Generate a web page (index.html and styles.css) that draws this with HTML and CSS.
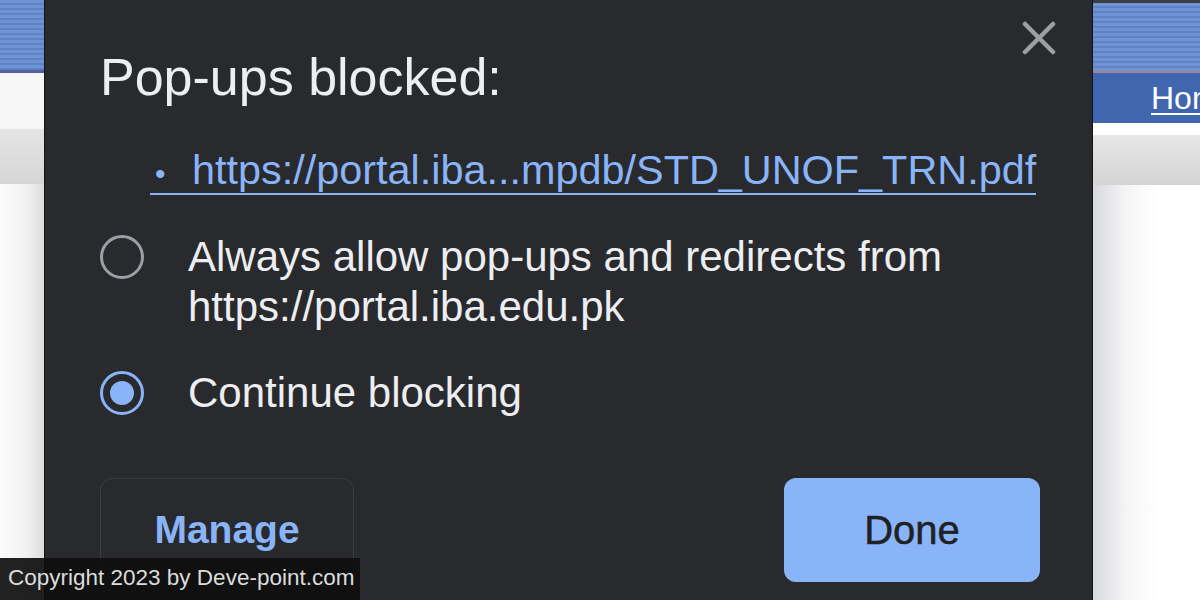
FILE: index.html
```html
<!DOCTYPE html>
<html lang="en">
<head>
  <meta charset="UTF-8">
  <title>Pop-ups blocked</title>
  <link rel="stylesheet" href="styles.css">
</head>
<body>

  <div class="page">
    <div class="side side-left">
      <div class="band"></div>
      <div class="rule"></div>
      <div class="blank"></div>
      <div class="shade"></div>
      <div class="fill"></div>
    </div>

    <div class="bubble">
      <div class="head">
        <h2>Pop-ups blocked:</h2>
        <svg class="close" width="34" height="34" viewBox="0 0 34 34">
          <path d="M3 3 L31 31 M31 3 L3 31" stroke="#9d9fa3" stroke-width="4.5" stroke-linecap="round"/>
        </svg>
      </div>

      <div class="links">
        <a class="blocked"><span class="dot">•</span>https://portal.iba...mpdb/STD_UNOF_TRN.pdf</a>
      </div>

      <div class="option">
        <span class="radio"></span>
        <span class="label">Always allow pop-ups and redirects from<br>https://portal.iba.edu.pk</span>
      </div>

      <div class="option">
        <span class="radio checked"></span>
        <span class="label">Continue blocking</span>
      </div>

      <div class="actions">
        <button class="manage">Manage</button>
        <button class="done">Done</button>
      </div>
    </div>

    <div class="side side-right">
      <div class="top-edge"></div>
      <div class="band"></div>
      <div class="rule"></div>
      <div class="nav"><a>Home</a></div>
      <div class="blank"></div>
      <div class="shade"></div>
      <div class="fill"></div>
    </div>
  </div>

  <div class="copyright">Copyright 2023 by Deve-point.com</div>

</body>
</html>
```

FILE: styles.css
```css
body {
  margin: 0;
  width: 1200px;
  height: 600px;
  overflow: hidden;
  font-family: 'Liberation Sans', Arial, sans-serif;
  background: #292a2d;
  position: relative;
}

.page {
  display: flex;
  height: 600px;
}

/* page behind the bubble */
.side {
  display: flex;
  flex-direction: column;
  overflow: hidden;
}

.side-left {
  width: 44px;
}

.side-right {
  width: 107px;
}

.band {
  height: 70px;
  background: repeating-linear-gradient(to bottom, #6f93d3 0, #6f93d3 3px, #5e82c6 3px, #5e82c6 5px);
}

.side-right .band {
  height: 67px;
}

.top-edge {
  height: 3px;
  background: #3a3d44;
}

.rule {
  height: 3px;
  background: #8f89a6;
}

.side-left .rule {
  background: #5560a0;
}

.blank {
  height: 56px;
  background: #f7f7f7;
}

.side-right .blank {
  height: 12px;
  background: #ffffff;
}

.shade {
  height: 55px;
  background: linear-gradient(to bottom, #e4e4e4, #d6d6d6);
}

.side-right .shade {
  height: 50px;
  background: linear-gradient(to bottom, #e6e6e6, #d3d3d3);
}

.fill {
  flex: 1;
}

.side-left .fill {
  background: linear-gradient(to right, #fbfbfb, #f2f2f2 60%, #dcdcdc);
}

.side-right .fill {
  background: linear-gradient(to right, #d8d9dd, #f4f4f5 30%, #ffffff 60%);
}

.nav {
  height: 50px;
  background: #4166b0;
  padding-left: 58px;
  white-space: nowrap;
}

.nav a {
  color: #ffffff;
  font-size: 32px;
  line-height: 50px;
  text-decoration: underline;
  text-decoration-thickness: 2px;
  text-underline-offset: 4px;
}

/* the bubble */
.bubble {
  width: 1049px;
  background: #292a2d;
  border-left: 1px solid #141416;
  border-right: 1px solid #141416;
  padding: 0 52px 0 55px;
  box-sizing: border-box;
  color: #e8eaed;
}

.head {
  display: flex;
  justify-content: space-between;
  align-items: flex-start;
}

h2 {
  margin: 52px 0 0;
  font-size: 52px;
  font-weight: normal;
  line-height: 50px;
  color: #eceef1;
}

.close {
  margin-top: 21px;
  margin-right: -16px;
}

.links {
  margin-top: 49px;
  padding-left: 50px;
}

.blocked {
  display: inline-block;
  color: #8ab4f8;
  font-size: 41.4px;
  line-height: 39px;
  padding-left: 5px;
  border-bottom: 2px solid #8ab4f8;
  white-space: nowrap;
}

.dot {
  display: inline-block;
  width: 37px;
  font-size: 30px;
}

.option {
  display: flex;
  align-items: flex-start;
  margin-top: 37px;
}

.option + .option {
  margin-top: 36px;
}

.radio {
  width: 38px;
  height: 38px;
  border: 3px solid #9aa0a6;
  border-radius: 50%;
  margin-top: 3px;
  margin-right: 44px;
  flex-shrink: 0;
  box-sizing: content-box;
  position: relative;
}

.radio.checked {
  border-color: #8ab4f8;
}

.radio.checked::after {
  content: "";
  position: absolute;
  left: 7px;
  top: 7px;
  width: 24px;
  height: 24px;
  border-radius: 50%;
  background: #8ab4f8;
}

.label {
  font-size: 42px;
  line-height: 50px;
  color: #eceef1;
}

.actions {
  display: flex;
  justify-content: space-between;
  margin-top: 60px;
}

button {
  font-family: 'Liberation Sans', Arial, sans-serif;
  font-size: 39px;
  font-weight: bold;
  height: 104px;
  border-radius: 12px;
  cursor: pointer;
}

.manage {
  width: 254px;
  background: #292a2d;
  border: 1px solid #3b3d41;
  color: #8ab4f8;
}

.done {
  width: 256px;
  background: #8ab4f8;
  border: none;
  color: #202124;
  font-size: 40px;
  font-weight: normal;
  -webkit-text-stroke: 0.5px #202124;
}

.copyright {
  position: absolute;
  left: 0;
  bottom: 0;
  width: 360px;
  height: 42px;
  background: rgba(14, 14, 15, 0.92);
  color: #dcdcdc;
  font-size: 22.5px;
  line-height: 40px;
  padding-left: 8px;
  box-sizing: border-box;
  white-space: nowrap;
}
```
